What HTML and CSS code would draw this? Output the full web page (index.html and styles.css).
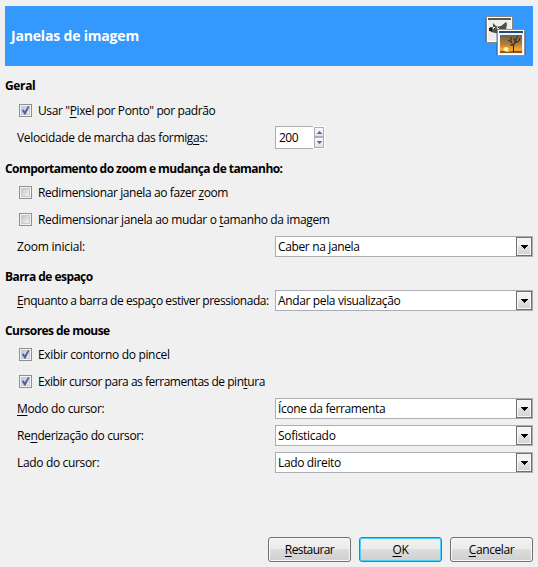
FILE: index.html
```html
<!DOCTYPE html>
<html lang="pt-BR">
<head>
<meta charset="utf-8">
<title>Janelas de imagem</title>
<link rel="stylesheet" href="styles.css">
</head>
<body>
<svg class="defs" aria-hidden="true">
  <defs>
    <linearGradient id="well" x1="0" y1="0" x2="1" y2="1"><stop offset="0" stop-color="#bfc3cc"/><stop offset="1" stop-color="#f6f6f6"/></linearGradient>
    <linearGradient id="sky" x1="0" y1="0" x2="0" y2="1"><stop offset="0" stop-color="#69624f"/><stop offset=".5" stop-color="#b57c38"/><stop offset=".8" stop-color="#f7a92f"/><stop offset="1" stop-color="#d98624"/></linearGradient>
    <symbol id="box" viewBox="0 0 13 13">
      <rect x=".5" y=".5" width="12" height="12" fill="#f4f4f4" stroke="#8e8f8f"/>
      <rect x="2.5" y="2.5" width="8" height="8" fill="url(#well)" stroke="#c5c9d0"/>
    </symbol>
    <symbol id="tick" viewBox="0 0 13 13">
      <use href="#box"/>
      <path d="M3.2 6.3 4.6 5.7 5.8 7.8 9 2.4 10.1 2.7 6.4 10.3H5.5Z" fill="#435a9c" stroke="#435a9c" stroke-width=".5"/>
    </symbol>
    <symbol id="arrow" viewBox="0 0 7 4"><path d="M0 0H7V1H6V2H5V3H4V4H3V3H2V2H1V1H0Z"/></symbol>
  </defs>
</svg>
<main class="page">
  <header class="banner">
    <h1>Janelas de imagem</h1>
    <svg class="logo" width="44" height="44" viewBox="0 0 44 44">
      <rect x="3" y="6" width="28" height="25" rx="2" fill="#174f86" opacity=".35"/>
      <rect x="4.5" y="4.5" width="26" height="26" rx="1" fill="#eee" stroke="#85857e"/>
      <rect x="5.5" y="5.5" width="24" height="24" fill="none" stroke="#fff"/>
      <path d="M6 6H29V8H6Z" fill="#555753"/>
      <path d="M11 11 14 14H19L24 10 25 12 24 18 22 21 18 22 9 20 7 18 8 15 11 15Z" fill="#504e48"/>
      <circle cx="12" cy="16" r="1.3" fill="#eee"/><circle cx="16" cy="15.7" r="1.4" fill="#ddd"/>
      <path d="M7 16H10V19H7ZM12 16H13V17H12ZM16 15H17V16H16Z" fill="#171717"/>
      <rect x="14" y="19" width="30" height="25" rx="2" fill="#174f86" opacity=".35"/>
      <rect x="15.5" y="17.5" width="27" height="26" rx="1" fill="#f3f3ef" stroke="#92928b"/>
      <rect x="16.5" y="18.5" width="25" height="24" fill="none" stroke="#fff"/>
      <path d="M17 19H41V21H17Z" fill="#204a87"/>
      <rect x="18" y="23" width="22" height="18" fill="url(#sky)"/>
      <circle cx="24" cy="37.5" r="2.5" fill="#fff3a2"/>
      <path d="M18 39H22L26 40 32 39H40V41H18Z" fill="#8b5621"/>
      <path d="M31.5 40V33L29 30 26 28M29 30V25M31.5 34 33 30 32 26M33 31 37 29 38 26M34 31V27L36 24M31 33 28 33" fill="none" stroke="#30251d" stroke-width="1"/>
    </svg>
  </header>

  <h2 class="first">Geral</h2>
  <div class="row"><svg class="check"><use href="#tick"/></svg><span class="t1">Usar "<u>P</u>ixel por Ponto" por padrão</span></div>
  <div class="row"><span class="label t2">Velocidade de marcha das formig<u>a</u>s:</span>
    <div class="spin"><span class="num">200</span><div class="steps"><i><svg class="up"><use href="#arrow"/></svg></i><i><svg><use href="#arrow"/></svg></i></div></div>
  </div>

  <h2 class="zoom">Comportamento do zoom e mudança de tamanho:</h2>
  <div class="row"><svg class="check"><use href="#box"/></svg><span class="t3">Redimensionar janela ao fazer <u>z</u>oom</span></div>
  <div class="row"><svg class="check"><use href="#box"/></svg><span class="t4">Redimensionar janela ao mudar o <u>t</u>amanho da imagem</span></div>
  <div class="row"><span class="label t5">Zoom inicial:</span><div class="combo"><span class="c1">Caber na janela</span><b><svg><use href="#arrow"/></svg></b></div></div>

  <h2 class="space">Barra de espaço</h2>
  <div class="row"><span class="label t6"><u>E</u>nquanto a barra de espaço estiver pressionada:</span><div class="combo"><span class="c2">Andar pela visualização</span><b><svg><use href="#arrow"/></svg></b></div></div>

  <h2 class="mouse">Cursores de mouse</h2>
  <div class="row"><svg class="check"><use href="#tick"/></svg><span class="t7">Exibir contorno do pincel</span></div>
  <div class="row"><svg class="check"><use href="#tick"/></svg><span class="t8">Exibir cursor para as ferramentas de pin<u>t</u>ura</span></div>
  <div class="row"><span class="label t9"><u>M</u>odo do cursor:</span><div class="combo"><span class="c3">Ícone da ferramenta</span><b><svg><use href="#arrow"/></svg></b></div></div>
  <div class="row"><span class="label t10">Re<u>n</u>derização do cursor:</span><div class="combo"><span class="c4">Sofisticado</span><b><svg><use href="#arrow"/></svg></b></div></div>
  <div class="row"><span class="label t11">Lado do cursor:</span><div class="combo"><span class="c5">Lado direito</span><b><svg><use href="#arrow"/></svg></b></div></div>

  <footer>
    <button><span class="b1"><u>R</u>estaurar</span></button>
    <button class="ok"><span class="b2"><u>O</u>K</span></button>
    <button><span class="b3"><u>C</u>ancelar</span></button>
  </footer>
</main>
</body>
</html>
```
FILE: styles.css
```css
* { box-sizing: border-box; }
body { margin: 0; background: #f0f0f0; color: #000; font: 12px/16px "Open Sans", "Noto Sans", sans-serif; letter-spacing: -.2px; }
.defs { position: absolute; width: 0; height: 0; }
.page { width: 538px; height: 567px; padding: 6px 5px 0; overflow: hidden; }
.banner { width: 528px; height: 60px; padding: 0 7px 0 6px; background: #3399ff; display: flex; justify-content: space-between; align-items: center; }
h1 { margin: 0; font-size: 14px; line-height: 20px; color: #fff; letter-spacing: -.18px; }
.logo { margin-top: -4px; }
h2 { margin: 0; height: 27px; padding-top: 9px; font-size: 12px; line-height: 16px; white-space: nowrap; letter-spacing: -.55px; }
.first { height: 31px; padding-top: 12px; letter-spacing: -.35px; }
.zoom { height: 28px; padding-top: 10px; }
.row { height: 27px; padding-left: 12px; display: flex; align-items: center; white-space: nowrap; }
.label { flex: none; width: 258px; }
.check { width: 13px; height: 13px; margin: 0 6px 0 2px; }
u { text-decoration-thickness: 1px; text-underline-offset: 2px; }
.combo { width: 258px; height: 21px; border: 1px solid #abadb3; background: #fff; display: flex; align-items: center; justify-content: space-between; padding-left: 2px; }
.combo b { width: 16px; height: 19px; border: 1px solid #707070; background: linear-gradient(#f3f3f3 0 45%, #e2e2e2 50%, #d3d3d3); box-shadow: inset 0 0 0 1px #f8f8f8; display: flex; align-items: center; justify-content: flex-end; padding-right: 3px; }
.combo svg { width: 7px; height: 4px; }
.spin { width: 50px; height: 23px; background: #fff; display: flex; justify-content: space-between; }
.num { width: 38px; height: 23px; padding: 3px 0 0 3px; border: 1px solid #abadb3; border-right: 0; letter-spacing: -.5px; }
.steps { width: 11px; padding: 1px 1px 0 0; display: grid; align-content: start; }
.steps i { width: 10px; height: 10px; border: 1px solid #abadb3; background: linear-gradient(#fafafa, #e3e3e3); display: grid; place-items: center; }
.steps i + i { height: 11px; }
.steps svg { width: 5px; height: 3px; fill: #4f65ad; }
.up { transform: rotate(180deg); }
.t1, .t10 { letter-spacing: -.38px; }
.t2, .t4, .t9, .t11 { letter-spacing: -.34px; }
.t3 { letter-spacing: -.4px; }
.t6 { letter-spacing: -.45px; }
.t7 { letter-spacing: -.32px; }
.t8 { letter-spacing: -.48px; }
.c1, .c2, .c3, .c5 { letter-spacing: -.36px; }
.c4, .b2 { letter-spacing: -.3px; }
.b3 { letter-spacing: -.4px; }
.b1 { letter-spacing: -.6px; }
footer { margin-top: 61px; margin-left: 263px; display: flex; gap: 8px; }
button { width: 83px; height: 25px; padding: 0; border: 1px solid #707070; border-radius: 3px; background: linear-gradient(#f2f2f2 0, #ebebeb 48%, #dddddd 50%, #cfcfcf); box-shadow: inset 0 0 0 1px #f8f8f8; font: inherit; letter-spacing: inherit; color: inherit; }
.ok { border-color: #3c7fb1; box-shadow: inset 0 0 0 1px #46d2fb; }
```
